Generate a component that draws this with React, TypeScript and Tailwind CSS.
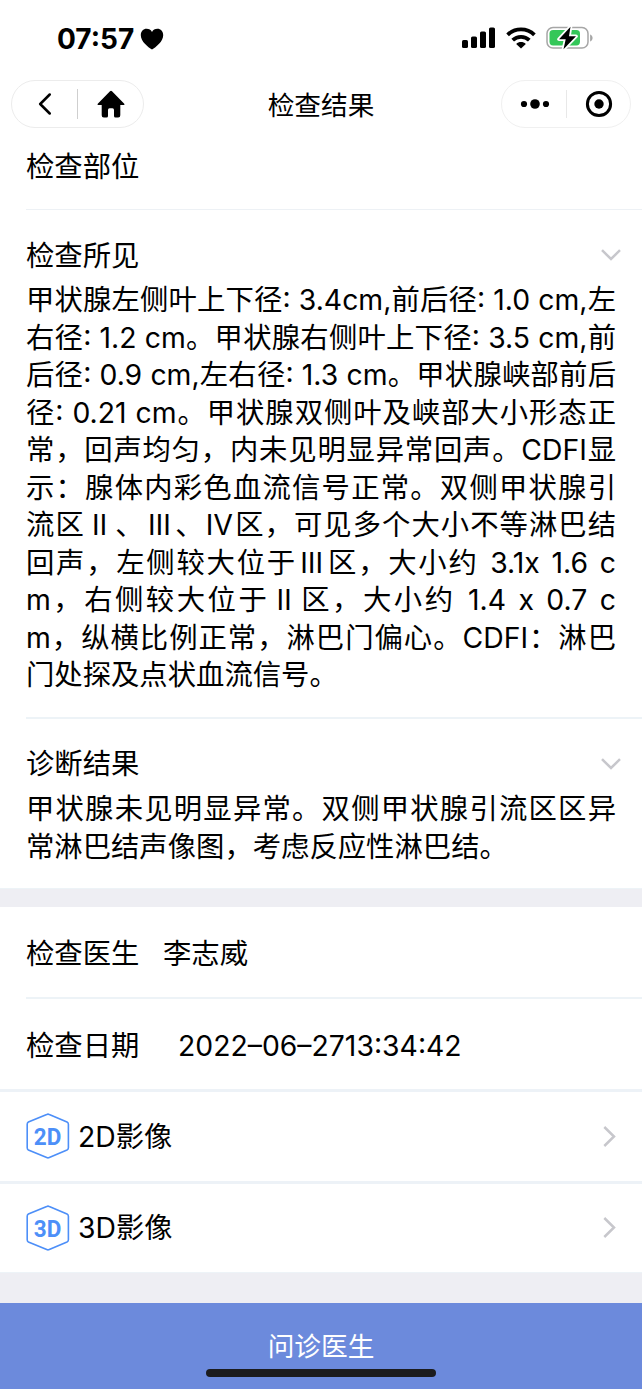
import React from "react";

const findings = [
  "甲状腺左侧叶上下径: 3.4cm,前后径: 1.0 cm,左",
  "右径: 1.2 cm。甲状腺右侧叶上下径: 3.5 cm,前",
  "后径: 0.9 cm,左右径: 1.3 cm。甲状腺峡部前后",
  "径: 0.21 cm。甲状腺双侧叶及峡部大小形态正",
  "常，回声均匀，内未见明显异常回声。CDFI显",
  "示：腺体内彩色血流信号正常。双侧甲状腺引",
  "流区Ⅱ、Ⅲ、Ⅳ区，可见多个大小不等淋巴结",
  "回声，左侧较大位于Ⅲ区，大小约 3.1x 1.6 c",
  "m，右侧较大位于Ⅱ区，大小约 1.4 x 0.7 c",
  "m，纵横比例正常，淋巴门偏心。CDFI：淋巴",
  "门处探及点状血流信号。",
];

const diagnosis = ["甲状腺未见明显异常。双侧甲状腺引流区区异", "常淋巴结声像图，考虑反应性淋巴结。"];

// Roman numerals sit in a full-width cell, like the ideographs around them.
function renderLine(line: string) {
  return line.split(/([ⅡⅢⅣ])/).map((part, i) =>
    /^[ⅡⅢⅣ]$/.test(part) ? (
      <span key={i} className="inline-block w-[29.5px] text-center [text-align-last:center]">
        {part}
      </span>
    ) : (
      part
    ),
  );
}

function lineClass(line: string, last: boolean) {
  if (last) return "h-[37.5px] leading-[37.5px] whitespace-nowrap";
  if (line.endsWith(" c"))
    return "h-[37.5px] leading-[37.5px] whitespace-nowrap text-justify [text-align-last:justify] [word-spacing:2px]";
  return "h-[37.5px] leading-[37.5px] whitespace-nowrap text-justify [text-align-last:justify]";
}

function Lines({ lines }: { lines: string[] }) {
  return (
    <div className="w-[590px]">
      {lines.map((line, i) => (
        <p key={line} className={lineClass(line, i === lines.length - 1)}>
          {renderLine(line)}
        </p>
      ))}
    </div>
  );
}

function ChevronDown() {
  return (
    <svg width="20" height="12" viewBox="0 0 20 12" fill="none" stroke="#c7c7cc" strokeWidth="2.5">
      <path d="M1 1.2 10 10 19 1.2" />
    </svg>
  );
}

function ChevronRight() {
  return (
    <svg width="13" height="21" viewBox="0 0 13 21" fill="none" stroke="#c7c7cc" strokeWidth="2.5">
      <path d="M1.3 1 11 10.5 1.3 20" />
    </svg>
  );
}

function HexBadge({ label }: { label: string }) {
  return (
    <svg width="44" height="46" viewBox="0 0 44 46">
      <path
        d="M20.7 1.4Q22 .8 23.3 1.4L41 9Q42.4 9.7 42.4 11.2V34.8Q42.4 36.3 41 37L23.3 44.6Q22 45.2 20.7 44.6L2.4 37Q1.2 36.3 1.2 34.8V11.2Q1.2 9.7 2.4 9Z"
        fill="none"
        stroke="#4d8ff8"
        strokeWidth="1.6"
      />
      <text x="21.6" y="31.6" textAnchor="middle" textLength="27.5" lengthAdjust="spacingAndGlyphs" className="fill-[#4d8ff8] font-['Roboto'] text-[24px] font-bold">
        {label}
      </text>
    </svg>
  );
}

function ImageRow({ badge, label }: { badge: string; label: string }) {
  return (
    <button className="flex h-[88.5px] w-full items-center pr-[26px] pl-[26px] text-left">
      <HexBadge label={badge} />
      <span className="ml-[8px] flex-1 pt-[2px]">{label}</span>
      <ChevronRight />
    </button>
  );
}

function StatusBar() {
  return (
    <div className="flex h-[76px] items-center justify-between pr-[48px] pl-[57px]">
      <div className="flex items-center gap-[6px]">
        <span className="pt-px font-['Inter'] text-[28px] leading-none font-bold">07:57</span>
        <svg className="mt-[2px]" width="24" height="22" viewBox="0 0 24 22">
          <path d="M12 21.5C8 19 .8 13.5.8 7.2.8 3.5 3.3.8 6.6.8 9 .8 11 2 12 4 13 2 15 .8 17.4.8c3.3 0 5.8 2.7 5.8 6.4 0 6.3-7.2 11.8-11.2 14.3Z" />
        </svg>
      </div>
      <div className="flex items-center">
        <svg width="34" height="22" viewBox="0 0 34 22">
          <rect x="0" y="13" width="6" height="8" rx="1.6" />
          <rect x="9" y="9.5" width="6" height="11.5" rx="1.6" />
          <rect x="18" y="4.5" width="6" height="16.5" rx="1.6" />
          <rect x="27" y="0.5" width="6" height="20.5" rx="1.6" />
        </svg>
        <svg className="ml-[10px]" width="30" height="22" viewBox="0 0 30 22" fill="none" stroke="black" strokeWidth="3.8">
          <path d="M1.6 7.8C9 .6 21 .6 28.4 7.8" />
          <path d="M6.7 13.2C11.3 8.8 18.7 8.8 23.3 13.2" />
          <path d="M10.2 16.9C12.8 14.3 17.2 14.3 19.8 16.9L15 21.5Z" fill="black" stroke="none" />
        </svg>
        <svg className="ml-[10px]" width="48" height="24" viewBox="0 0 48 24">
          <rect x="1" y="1.5" width="41" height="20.5" rx="6" fill="none" stroke="#a6a6a6" strokeWidth="1.5" />
          <path d="M44.1 8.5v7c3.3-1.2 3.3-5.8 0-7Z" fill="#a6a6a6" />
          <rect x="3.5" y="4.1" width="30.5" height="15.3" rx="3.6" fill="#34c759" />
          <path d="M24.5 .8 13 13.2H19.7L17.5 23.2 30 10.3H23Z" fill="black" stroke="white" strokeWidth="3.6" paintOrder="stroke" strokeLinejoin="round" />
        </svg>
      </div>
    </div>
  );
}

function NavBar() {
  return (
    <div className="flex h-[52px] items-center justify-between px-[11px]">
      <div className="flex h-[48px] w-[133px] items-center rounded-full border border-[#ececec]">
        <div className="flex w-[65px] justify-center">
          <svg width="13" height="22" viewBox="0 0 13 22" fill="none" stroke="black" strokeWidth="2.5" strokeLinecap="round" strokeLinejoin="round">
            <path d="M11.7 1.5 2.2 11 11.7 20.5" />
          </svg>
        </div>
        <div className="h-[30px] w-px bg-[#cfcfcf]" />
        <div className="flex w-[65px] justify-center">
          <svg width="28" height="28" viewBox="0 0 28 28">
            <path d="M13 1.2Q14 .2 15 1.2L27 13.4Q28.2 15 26.3 15H23.3V25.3Q23.3 27.5 21.2 27.5H18.5Q17 27.5 17 26V20Q17 18.3 15.5 18.3H12.5Q11 18.3 11 20V26Q11 27.5 9.5 27.5H6.8Q4.7 27.5 4.7 25.3V15H1.7Q-.2 15 1 13.4Z" />
          </svg>
        </div>
      </div>
      <h1 className="pt-[2px] pr-[3px] text-[26.7px] leading-none">检查结果</h1>
      <div className="flex h-[48px] w-[130px] items-center rounded-full border border-[#f0f0f0]">
        <div className="flex w-[64px] justify-center pl-px">
          <svg width="30" height="12" viewBox="0 0 30 12">
            <circle cx="4" cy="6" r="3.1" />
            <circle cx="15" cy="6" r="4.8" />
            <circle cx="26" cy="6" r="3.1" />
          </svg>
        </div>
        <div className="h-[28px] w-px bg-[#e8e8e8]" />
        <div className="flex w-[63px] justify-center">
          <svg width="28" height="28" viewBox="0 0 28 28">
            <circle cx="14" cy="14" r="11.6" fill="none" stroke="black" strokeWidth="3" />
            <circle cx="14" cy="14" r="4.7" />
          </svg>
        </div>
      </div>
    </div>
  );
}

export default function App() {
  return (
    <div className="flex h-[1389px] w-[642px] flex-col overflow-hidden bg-white font-['Inter','Noto_Sans_CJK_SC',sans-serif] text-[28.35px] font-[380] text-black">
      <StatusBar />
      <div className="mt-[2px]">
        <NavBar />
      </div>
      <div className="ml-[26px] flex h-[80px] items-center border-b-[1.5px] border-[#edf1f5] pb-[5px]">检查部位</div>
      <section className="ml-[26px] h-[509px] border-b-2 border-[#edf3f7] pt-[26px]">
        <div className="flex h-[38px] items-center justify-between pr-[21px]">
          <h2 className="pt-[2px]">检查所见</h2>
          <ChevronDown />
        </div>
        <div className="pt-[8px]">
          <Lines lines={findings} />
        </div>
      </section>
      <section className="ml-[26px] h-[169px] pt-[26px]">
        <div className="flex h-[38px] items-center justify-between pr-[21px]">
          <h2>诊断结果</h2>
          <ChevronDown />
        </div>
        <div className="pt-[8px]">
          <Lines lines={diagnosis} />
        </div>
      </section>
      <div className="h-[19px] border-t border-[#edf3f7] bg-[#eeeef3]" />
      <div className="ml-[26px] flex h-[92px] items-center border-b-2 border-[#edf3f7] pt-[5px]">
        <span className="w-[137px]">检查医生</span>
        <span>李志威</span>
      </div>
      <div className="ml-[26px] flex h-[90px] items-center pt-[5px]">
        <span className="w-[152px]">检查日期</span>
        <span>2022–06–2713:34:42</span>
      </div>
      <div className="h-[3px] bg-[#edf2f7]" />
      <ImageRow badge="2D" label="2D影像" />
      <div className="h-[3px] bg-[#edf2f7]" />
      <ImageRow badge="3D" label="3D影像" />
      <div className="h-[31px] border-t border-[#edf3f7] bg-[#eeeef3]" />
      <button className="flex flex-1 flex-col items-center bg-[#6c8adc] pt-[24px] text-[26.7px] text-white">
        <span className="h-[38px] leading-[38px]">问诊医生</span>
        <span className="mt-[4px] h-[8px] w-[230px] rounded-full bg-[#1c1c1e]" />
      </button>
    </div>
  );
}
